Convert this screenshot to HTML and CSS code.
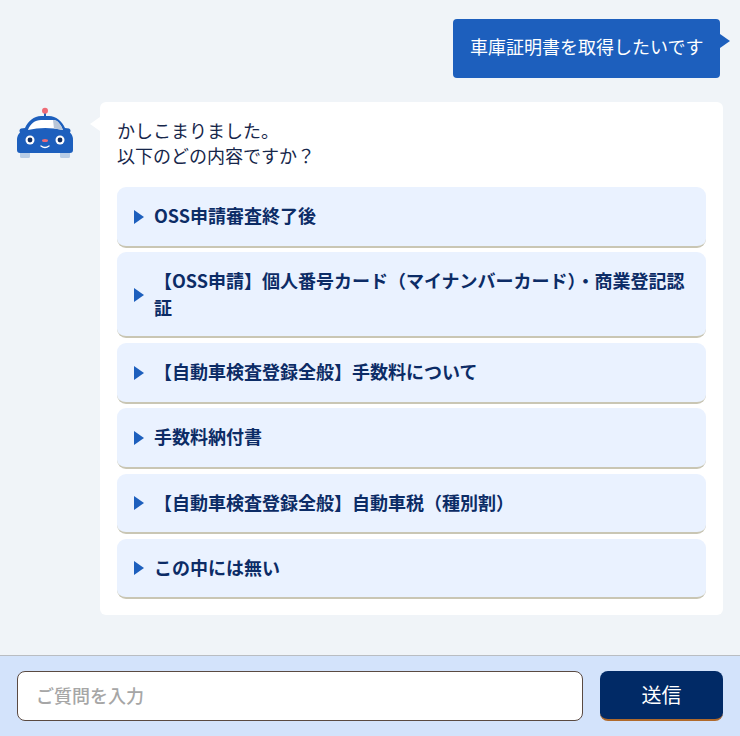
FILE: index.html
```html
<!DOCTYPE html>
<html lang="ja">
<head>
  <meta charset="UTF-8" />
  <meta name="viewport" content="width=device-width, initial-scale=1.0"/>
  <title>車庫証明書</title>
  <link rel="stylesheet" href="styles.css">
</head>
<body>
  <main class="chat">
    <div class="user-row">
      <div class="user-bubble">車庫証明書を取得したいです</div>
    </div>

    <div class="bot-row">
      <svg class="avatar" width="56" height="52" viewBox="0 0 56 52">
        <rect x="27" y="4" width="2" height="7" fill="#1d5fbd"/>
        <circle cx="28" cy="3.700" r="3" fill="#ee6b76"/>
        <rect x="3" y="44" width="10" height="7" rx="1.500" fill="#b9cde6"/>
        <rect x="43" y="44" width="10" height="7" rx="1.500" fill="#b9cde6"/>
        <path d="M8 21 C11 14 17 9 24 9 H32 C39 9 45 14 48 21 L52 21.500 Q54.500 23 53 25.500 Q56 28 56 33 V43 Q56 46 53 46 H3 Q0 46 0 43 V33 Q0 28 3 25.500 Q1.500 23 4 21.500 Z" fill="#1d5fbd"/>
        <path d="M11 23 C13 17 18 13 24 13 H36 C41 13 44 18 46 23 Q28 19 11 23 Z" fill="#ffffff"/>
        <path d="M36 13 C41 13 44 18 46 23 Q42 22 37 21.500 Z" fill="#b9c6d8"/>
        <circle cx="13" cy="33" r="4.500" fill="#ffffff"/>
        <circle cx="13" cy="33" r="2.400" fill="#0f2a5c"/>
        <circle cx="43" cy="33" r="4.500" fill="#ffffff"/>
        <circle cx="43" cy="33" r="2.400" fill="#0f2a5c"/>
        <ellipse cx="28" cy="33.500" rx="3" ry="1.500" fill="#ee6b76"/>
        <path d="M24 39 Q28 42 32 39" fill="none" stroke="#ffffff" stroke-width="1.300" stroke-linecap="round"/>
      </svg>

      <div class="bot-bubble">
        <p class="bot-text">かしこまりました。<br>以下のどの内容ですか？</p>
        <ul class="options">
          <li class="option"><span class="arrow"></span><span class="label">OSS申請審査終了後</span></li>
          <li class="option"><span class="arrow"></span><span class="label">【OSS申請】個人番号カード（マイナンバーカード）・商業登記認証</span></li>
          <li class="option"><span class="arrow"></span><span class="label">【自動車検査登録全般】手数料について</span></li>
          <li class="option"><span class="arrow"></span><span class="label">手数料納付書</span></li>
          <li class="option"><span class="arrow"></span><span class="label">【自動車検査登録全般】自動車税（種別割）</span></li>
          <li class="option"><span class="arrow"></span><span class="label">この中には無い</span></li>
        </ul>
      </div>
    </div>
  </main>

  <footer class="composer">
    <input class="composer-input" type="text" placeholder="ご質問を入力" />
    <button class="send">送信</button>
  </footer>
</body>
</html>
```

FILE: styles.css
```css
* {
  box-sizing: border-box;
}

html, body {
  height: 100%;
}

body {
  margin: 0;
  background: #f0f4f8;
  color: #0f2a5c;
  font-family: "Noto Sans CJK JP", "Noto Sans", sans-serif;
  display: flex;
  flex-direction: column;
  overflow: hidden;
}

.chat {
  flex: 1;
  padding: 19px 17px 0;
}

.user-row {
  display: flex;
  justify-content: flex-end;
  padding-right: 3px;
}

.user-bubble {
  position: relative;
  background: #1d5fbd;
  color: #ffffff;
  height: 59px;
  width: 267px;
  padding: 0 17px;
  border-radius: 4px;
  font-size: 18px;
  line-height: 55px;
  white-space: nowrap;
}

.user-bubble::after {
  content: "";
  position: absolute;
  left: 100%;
  top: 15px;
  border-left: 10px solid #1d5fbd;
  border-top: 7px solid transparent;
  border-bottom: 7px solid transparent;
}

.bot-row {
  display: flex;
  align-items: flex-start;
  margin-top: 24px;
}

.avatar {
  flex: none;
  margin: 5px 27px 0 0;
}

.bot-bubble {
  position: relative;
  flex: 1;
  background: #ffffff;
  border-radius: 6px;
  padding: 16px 17px 16px;
}

.bot-bubble::before {
  content: "";
  position: absolute;
  right: 100%;
  top: 15px;
  border-right: 10px solid #ffffff;
  border-top: 7px solid transparent;
  border-bottom: 7px solid transparent;
}

.bot-text {
  margin: 0 0 19px;
  font-size: 18px;
  line-height: 25px;
  color: #16264a;
}

.options {
  list-style: none;
  margin: 0;
  padding: 0;
  display: flex;
  flex-direction: column;
  gap: 4.700px;
}

.option {
  display: flex;
  align-items: center;
  min-height: 60.500px;
  padding: 14.400px 17px 15.900px;
  background: #eaf2ff;
  border-radius: 9px;
  border-bottom: 2px solid #c9c6b4;
}

.arrow {
  flex: none;
  width: 0;
  height: 0;
  margin: 2px 10px 0 0;
  border-left: 10px solid #1d5fbd;
  border-top: 7px solid transparent;
  border-bottom: 7px solid transparent;
}

.label {
  font-size: 18px;
  font-weight: 700;
  line-height: 27px;
  color: #0c2c66;
}

.composer {
  flex: none;
  height: 81px;
  background: #d3e3fb;
  border-top: 1px solid #b9bdc2;
  padding: 15px 17px;
  display: flex;
  gap: 17px;
}

.composer-input {
  flex: 1;
  height: 50px;
  padding: 0 18px 2px;
  background: #ffffff;
  border: 1px solid #5a4a42;
  border-radius: 8px;
  font-family: inherit;
  font-size: 18px;
}

.composer-input::placeholder {
  color: #a6a6a6;
  font-weight: 500;
}

.send {
  flex: none;
  width: 123px;
  height: 50px;
  padding: 0 0 2px;
  background: #012a66;
  color: #ffffff;
  border: none;
  border-bottom: 2px solid #b06a2c;
  border-radius: 8px;
  font-family: inherit;
  font-size: 20px;
  font-weight: 400;
}
```
